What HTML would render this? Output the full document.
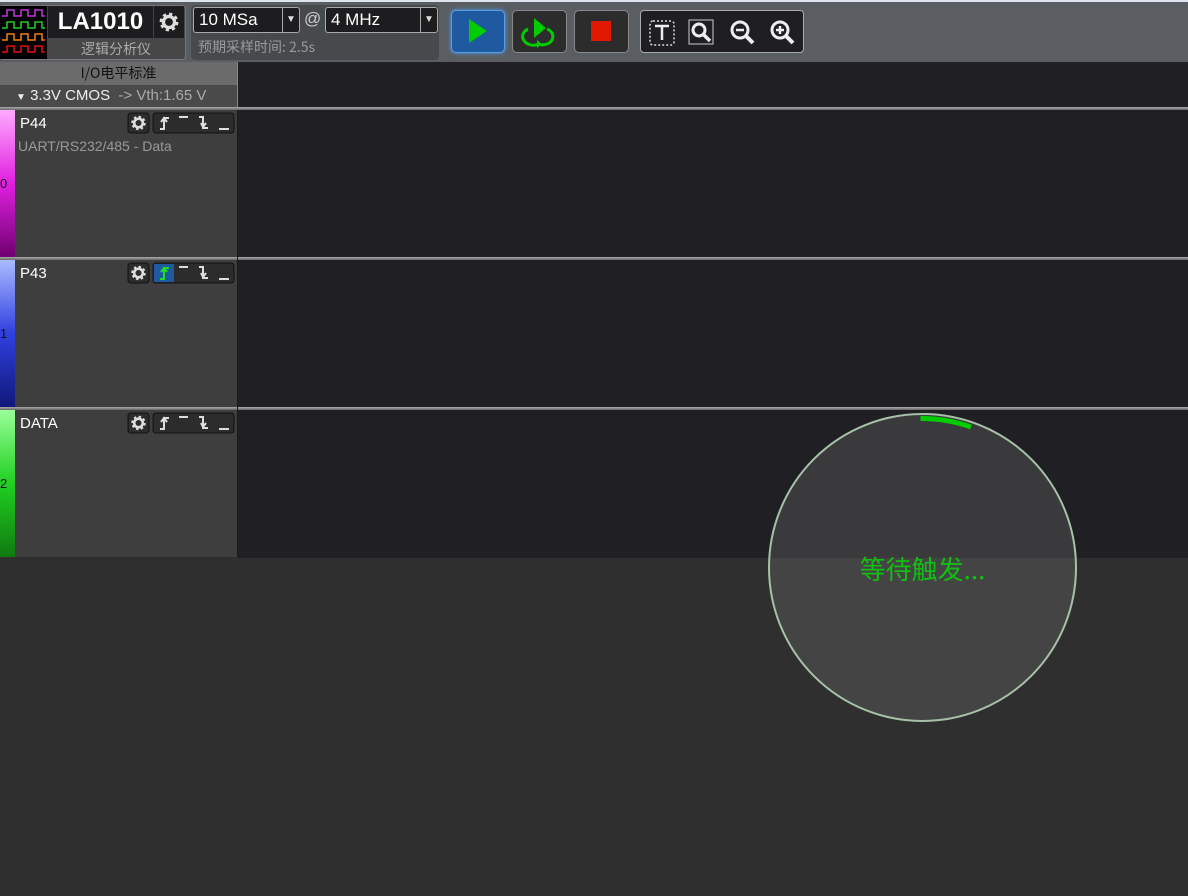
<!DOCTYPE html>
<html><head><meta charset="utf-8"><style>
*{margin:0;padding:0;box-sizing:border-box}
body{width:1188px;height:896px;overflow:hidden;background:#2f2f2f;font-family:"Liberation Sans","Noto Sans CJK SC",sans-serif;position:relative}
.a{position:absolute}
.cjk{font-family:"Noto Sans CJK SC","WenQuanYi Zen Hei",sans-serif}
</style></head><body>
<svg width="0" height="0" style="position:absolute"><defs>
<g id="gear"><circle r="5.5" fill="none" stroke="#ddd" stroke-width="3.5" stroke-dasharray="2.2 2.1"/><circle r="4.3" fill="none" stroke="#ddd" stroke-width="2.6"/></g>
</defs></svg>
<!-- toolbar -->
<div class="a" style="left:0;top:0;width:1188px;height:62px;background:#5a5d61"></div>
<div class="a" style="left:0;top:0;width:1188px;height:2px;background:#dfe5ee"></div>
<div class="a" style="left:0;top:5px;width:186px;height:55px;background:#444;border:1px solid #777;border-radius:4px"></div>
<div class="a" style="left:0;top:6px;width:47px;height:53px;background:#000"></div>
<svg class="a" style="left:0;top:6px" width="47" height="53" viewBox="0 0 47 53">
<path d="M2 10h5v-6h7v6h7v-6h7v6h7v-6h7v6h3" fill="none" stroke="#c03ad8" stroke-width="1.5"/>
<path d="M2 22h5v-6h7v6h7v-6h7v6h7v-6h7v6h3" fill="none" stroke="#22cc22" stroke-width="1.5"/>
<path d="M2 34h5v-6h7v6h7v-6h7v6h7v-6h7v6h3" fill="none" stroke="#f08010" stroke-width="1.5"/>
<path d="M2 46h5v-6h7v6h7v-6h7v6h7v-6h7v6h3" fill="none" stroke="#e01010" stroke-width="1.5"/>
</svg>
<div class="a" style="left:48px;top:6px;width:105px;height:32px;background:#1d1d1f;color:#fff;font-weight:bold;font-size:24px;line-height:32px;text-align:center">LA1010</div>
<div class="a" style="left:154px;top:6px;width:30px;height:32px;background:#1d1d1f"></div>
<svg class="a" style="left:154px;top:6px" width="30" height="32"><g transform="translate(15,16) scale(1.3)"><use href="#gear"/></g></svg>
<div class="a cjk" style="left:48px;top:39px;width:136px;height:20px;background:#474747;color:#aaa;font-size:14px;line-height:20px;text-align:center">逻辑分析仪</div>
<div class="a" style="left:191px;top:5px;width:248px;height:55px;background:#474a4d;border-radius:4px"></div>
<div class="a" style="left:193px;top:7px;width:107px;height:26px;background:#1d1d1f;border:1px solid #aaa;border-radius:3px;color:#fff;font-size:17px;line-height:24px;padding-left:5px">10 MSa</div>
<div class="a" style="left:282px;top:8px;width:1px;height:24px;background:#aaa"></div>
<div class="a" style="left:286px;top:14px;color:#ddd;font-size:10px">▼</div>
<div class="a" style="left:304px;top:9px;color:#ccc;font-size:17px">@</div>
<div class="a" style="left:325px;top:7px;width:113px;height:26px;background:#1d1d1f;border:1px solid #aaa;border-radius:3px;color:#fff;font-size:17px;line-height:24px;padding-left:5px">4 MHz</div>
<div class="a" style="left:420px;top:8px;width:1px;height:24px;background:#aaa"></div>
<div class="a" style="left:424px;top:14px;color:#ddd;font-size:10px">▼</div>
<div class="a cjk" style="left:198px;top:37px;color:#999;font-size:14px;line-height:20px">预期采样时间: 2.5s</div>
<div class="a" style="left:451px;top:10px;width:54px;height:43px;background:#1f5aa0;border:1px solid #5aa0e0;border-radius:5px;box-shadow:0 0 4px #4aa0ff"></div>
<svg class="a" style="left:451px;top:10px" width="54" height="43"><path d="M18 9L36 21L18 33Z" fill="#00cc00"/></svg>
<div class="a" style="left:512px;top:10px;width:55px;height:43px;background:#2c2c2c;border:1px solid #888;border-radius:5px"></div>
<svg class="a" style="left:512px;top:10px" width="55" height="43"><path d="M22 8L34 18L22 28Z" fill="#00cc00"/><path d="M16 19a10 8 0 0 0 11 15M35 19a10 8 0 0 1-9 15" fill="none" stroke="#00cc00" stroke-width="3"/><path d="M25 30l5 4-5 4z" fill="#00cc00"/></svg>
<div class="a" style="left:574px;top:10px;width:55px;height:43px;background:#2c2c2c;border:1px solid #888;border-radius:5px"></div>
<div class="a" style="left:591px;top:21px;width:20px;height:20px;background:#e01800"></div>
<div class="a" style="left:640px;top:10px;width:164px;height:43px;background:#1f1f23;border:1px solid #aaa;border-radius:4px"></div>
<svg class="a" style="left:640px;top:10px" width="164" height="43">
<rect x="10" y="11" width="24" height="24" rx="3" fill="none" stroke="#ddd" stroke-width="1.5" stroke-dasharray="2 2"/>
<path d="M15 16h14M22 16v14" stroke="#eee" stroke-width="2.5"/>
<rect x="49" y="10" width="24" height="24" fill="none" stroke="#ccc" stroke-width="1"/>
<circle cx="59" cy="20" r="6" fill="none" stroke="#eee" stroke-width="3"/><path d="M63 24l7 7" stroke="#eee" stroke-width="3.5"/>
<circle cx="100" cy="20" r="8" fill="none" stroke="#eee" stroke-width="3"/><path d="M96 20h8" stroke="#eee" stroke-width="2.5"/><path d="M106 26l7 7" stroke="#eee" stroke-width="4"/>
<circle cx="140" cy="20" r="8" fill="none" stroke="#eee" stroke-width="3"/><path d="M136 20h8M140 16v8" stroke="#eee" stroke-width="2.5"/><path d="M146 26l7 7" stroke="#eee" stroke-width="4"/>
</svg>
<div class="a" style="left:238px;top:62px;width:950px;height:496px;background:#202024"></div>
<div class="a cjk" style="left:0;top:62px;width:238px;height:23px;background:#6b6b6b;color:#111;font-size:14px;line-height:23px;text-align:center;border-right:1px solid #888">I/O电平标准</div>
<div class="a" style="left:0;top:85px;width:238px;height:22px;background:#4a4a4a;color:#eee;font-size:15px;line-height:22px;padding-left:16px;border-right:1px solid #888"><span style="font-size:10px">▼</span>&nbsp;3.3V CMOS <span style="color:#aaa">&nbsp;-&gt; Vth:1.65 V</span></div>
<div class="a" style="left:0;top:107px;width:1188px;height:3px;background:linear-gradient(#aaa,#666)"></div>
<div class="a" style="left:0;top:257px;width:1188px;height:3px;background:linear-gradient(#aaa,#666)"></div>
<div class="a" style="left:0;top:407px;width:1188px;height:3px;background:linear-gradient(#aaa,#666)"></div>
<div class="a" style="left:0;top:110px;width:15px;height:147px;background:linear-gradient(#ffaaff,#e020e0 50%,#700070)"></div>
<div class="a" style="left:0;top:260px;width:15px;height:147px;background:linear-gradient(#aabbff,#3040e0 50%,#10187a)"></div>
<div class="a" style="left:0;top:410px;width:15px;height:147px;background:linear-gradient(#99ff99,#20d020 50%,#107a10)"></div>
<div class="a" style="left:0;top:176px;font-size:13px;color:#111">0</div>
<div class="a" style="left:0;top:326px;font-size:13px;color:#111">1</div>
<div class="a" style="left:0;top:476px;font-size:13px;color:#111">2</div>
<div class="a" style="left:15px;top:110px;width:222px;height:147px;background:#3e3e3e"></div>
<div class="a" style="left:15px;top:260px;width:222px;height:147px;background:#3e3e3e"></div>
<div class="a" style="left:15px;top:410px;width:222px;height:147px;background:#3e3e3e"></div>
<div class="a" style="left:237px;top:110px;width:1px;height:447px;background:#1a1a1a"></div>
<div class="a" style="left:20px;top:115px;color:#fff;font-size:15px">P44</div>
<div class="a" style="left:18px;top:138px;color:#999;font-size:14px">UART/RS232/485 - Data</div>
<div class="a" style="left:20px;top:265px;color:#fff;font-size:15px">P43</div>
<div class="a" style="left:20px;top:415px;color:#fff;font-size:15px">DATA</div>
<svg class="a" style="left:127px;top:112px" width="110" height="440">
<defs><g id="tb"><rect x="1" y="1" width="21" height="20" rx="3" fill="#2c2c2c" stroke="#111"/><g transform="translate(11.5,11)"><use href="#gear"/></g>
<rect x="26" y="1" width="81" height="20" rx="3" fill="#2c2c2c" stroke="#111"/>
<path d="M33 17h4v-11h5M34 10l3-4 3 4" fill="none" stroke="#ddd" stroke-width="2"/>
<path d="M52 5h9" stroke="#ddd" stroke-width="2"/>
<path d="M72 5h4v11h5M74 11l2 4 3-4" fill="none" stroke="#ddd" stroke-width="2"/>
<path d="M92 17h10" stroke="#ddd" stroke-width="2"/></g></defs>
<use href="#tb"/>
<g transform="translate(0,150)"><use href="#tb"/><rect x="27" y="2" width="20" height="18" fill="#1f5aa0"/><path d="M33 17h4v-11h5M34 10l3-4 3 4" fill="none" stroke="#22dd22" stroke-width="2"/></g>
<g transform="translate(0,300)"><use href="#tb"/></g>
</svg>
<div class="a" style="left:768px;top:413px;width:309px;height:309px;border-radius:50%;border:2px solid #a8c0a8;background:rgba(110,110,110,0.35)"></div>
<svg class="a" style="left:768px;top:413px" width="309" height="309"><path d="M152.5 5.5A149 149 0 0 1 203 14" fill="none" stroke="#00cc00" stroke-width="5"/></svg>
<div class="a cjk" style="left:768px;top:550px;width:309px;text-align:center;color:#10c010;font-size:26px;line-height:38px">等待触发...</div>
</body></html>
